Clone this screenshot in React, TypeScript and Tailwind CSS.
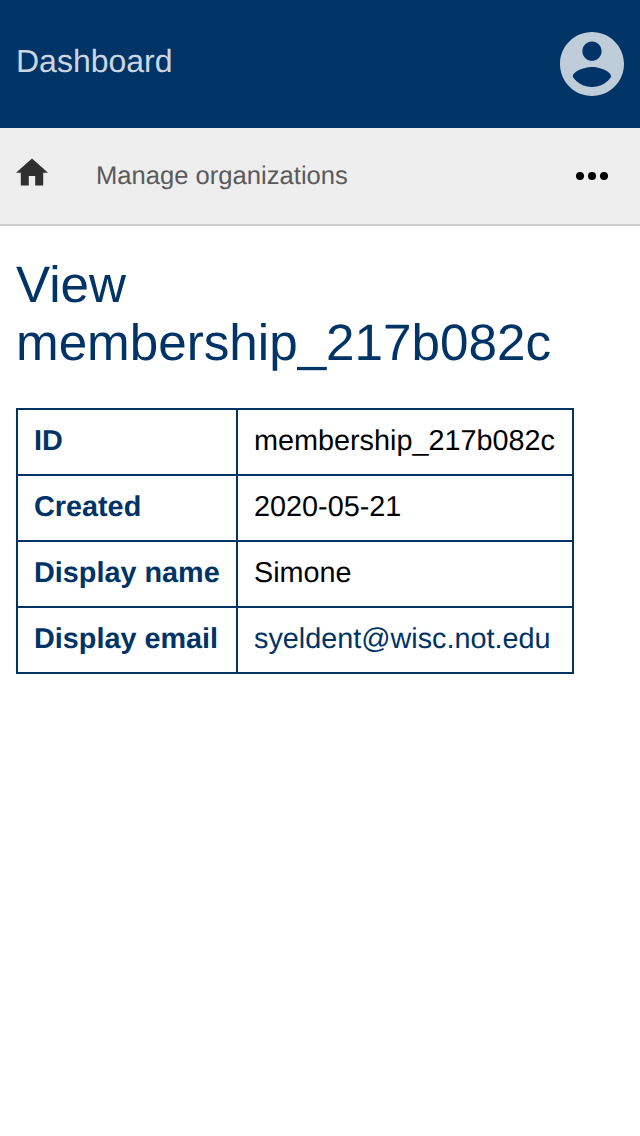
const rows = [
  { label: "ID", value: "membership_217b082c" },
  { label: "Created", value: "2020-05-21" },
  { label: "Display name", value: "Simone" },
  { label: "Display email", value: "syeldent@wisc.not.edu", email: true },
];

function AccountIcon() {
  return (
    <svg viewBox="2 2 20 20" className="size-16" fill="#bfccd9">
      <path d="M12 2C6.48 2 2 6.48 2 12s4.48 10 10 10 10-4.48 10-10S17.52 2 12 2zm0 3c1.66 0 3 1.34 3 3s-1.34 3-3 3-3-1.34-3-3 1.34-3 3-3zm0 14.200c-2.500 0-4.710-1.280-6-3.220.030-1.990 4-3.080 6-3.080 1.990 0 5.970 1.090 6 3.080-1.290 1.940-3.500 3.220-6 3.220z" />
    </svg>
  );
}

function HomeIcon() {
  return (
    <svg viewBox="2 2.75 20 17.5" className="h-7 w-8" fill="#2f2f2f">
      <path d="M10 20v-6h4v6h5v-8h3L12 3 2 12h3v8z" />
    </svg>
  );
}

export default function App() {
  return (
    <div className="min-h-[1136px] bg-white font-['Liberation_Sans',Arial,sans-serif] text-black [text-rendering:geometricPrecision]">
      <header className="flex h-32 items-center justify-between bg-[#003366] px-4">
        <a className="pb-1.5 text-[32px] leading-10 text-[#ccd6e0]">Dashboard</a>
        <AccountIcon />
      </header>
      <nav className="flex h-[98px] items-center border-b-2 border-[#cccccc] bg-[#eeeeee] px-4">
        <a className="pb-2"><HomeIcon /></a>
        <a className="ml-12 text-[25.6px] leading-8 text-[#5a5a5a]">Manage organizations</a>
        <button className="mr-4 ml-auto" aria-label="More">
          <svg viewBox="0 0 32 8" className="h-2 w-8">
            <circle cx="4" cy="4" r="4" />
            <circle cx="16" cy="4" r="4" />
            <circle cx="28" cy="4" r="4" />
          </svg>
        </button>
      </nav>
      <main className="px-4 pt-[30px]">
        <h1 className="text-[51.2px] leading-[58px] text-[#003366]">
          View<br />membership_217b082c
        </h1>
        <table className="mt-9 w-[558px] border-collapse text-[28.8px] leading-8">
          <tbody>
            {rows.map((row) => (
              <tr key={row.label}>
                <th className="h-[66px] w-[220px] border-2 border-[#003366] px-4 pb-0.5 text-left font-bold whitespace-nowrap text-[#003366]">{row.label}</th>
                <td className="border-2 border-[#003366] px-4 pb-0.5">
                  {row.email ? <a className="text-[#003366]">{row.value}</a> : row.value}
                </td>
              </tr>
            ))}
          </tbody>
        </table>
      </main>
    </div>
  );
}
